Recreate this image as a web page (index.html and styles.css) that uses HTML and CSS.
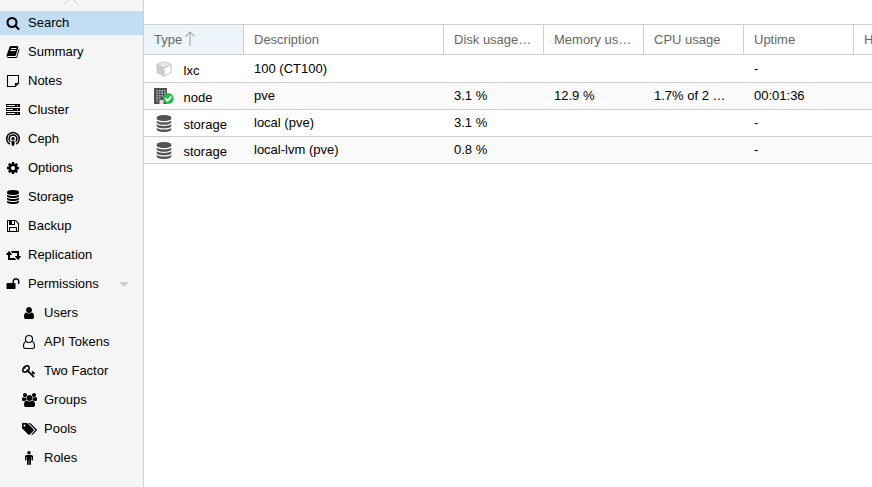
FILE: index.html
```
<!DOCTYPE html>
<html lang="en">
<head>
<meta charset="utf-8">
<title>Datacenter</title>
<link rel="stylesheet" href="styles.css">
</head>
<body>
<svg class="defs" aria-hidden="true">
<symbol id="database" viewBox="0 0 1792 1792"><path d="M896 768q237 0 443-43t325-127v170q0 69-103 128t-280 93.500-385 34.500-385-34.500-280-93.500-103-128v-170q119 84 325 127t443 43zm0 768q237 0 443-43t325-127v170q0 69-103 128t-280 93.500-385 34.500-385-34.500-280-93.500-103-128v-170q119 84 325 127t443 43zm0-384q237 0 443-43t325-127v170q0 69-103 128t-280 93.500-385 34.500-385-34.500-280-93.500-103-128v-170q119 84 325 127t443 43zm0-1152q208 0 385 34.500t280 93.500 103 128v128q0 69-103 128t-280 93.500-385 34.500-385-34.500-280-93.500-103-128v-128q0-69 103-128t280-93.500 385-34.500z"/></symbol>
</svg>
<div class="app">
<nav class="sidebar">
  <svg class="scroll-up" viewBox="0 0 16 6"><path d="M1 4.500L8-2.500l7 7"/></svg>
  <a class="item active"><svg class="icon" viewBox="0 0 1792 1792"><path d="M1216 832q0-185-131.500-316.500t-316.500-131.500-316.500 131.500-131.500 316.500 131.500 316.500 316.500 131.500 316.500-131.500 131.500-316.500zm512 832q0 52-38 90t-90 38q-54 0-90-38l-343-342q-179 124-399 124-143 0-273.500-55.500t-225-150-150-225-55.500-273.500 55.500-273.500 150-225 225-150 273.500-55.500 273.500 55.500 225 150 150 225 55.500 273.500q0 220-124 399l343 343q37 37 37 90z"/></svg>Search</a>
  <a class="item"><svg class="icon" viewBox="0 0 1792 1792"><path d="M1703 478q40 57 18 129l-275 906q-19 64-76.500 107.500t-122.500 43.500h-923q-77 0-148.500-53.500t-99.500-131.500q-24-67-2-127 0-4 3-27t4-37q1-8-3-21.500t-3-19.500q2-11 8-21t16.500-23.500 16.500-23.500q23-38 45-91.500t30-91.500q3-10 .5-30t-.5-28q3-11 17-28t17-23q21-36 42-92t25-90q1-9-2.500-32t.5-28q4-13 22-30.500t22-22.500q19-26 42.500-84.500t27.500-96.500q1-8-3-25.500t-2-26.500q2-8 9-18t18-23 17-21q8-12 16.500-30.500t15-35 16-36 19.500-32 26.500-23.500 36-11.500 47.500 5.500l-1 3q38-9 51-9h761q74 0 114 56t18 130l-274 906q-36 119-71.500 153.500t-128.500 34.500h-869q-27 0-38 15-11 16-1 43 24 70 144 70h923q29 0 56-15.500t35-41.500l300-987q7-22 5-57 38 15 59 43zm-1064 2q-4 13 2 22.500t20 9.500h608q13 0 25.500-9.500t16.500-22.500l21-64q4-13-2-22.500t-20-9.500h-608q-13 0-25.500 9.500t-16.500 22.500zm-83 256q-4 13 2 22.500t20 9.500h608q13 0 25.500-9.500t16.500-22.500l21-64q4-13-2-22.500t-20-9.500h-608q-13 0-25.500 9.500t-16.500 22.500z"/></svg>Summary</a>
  <a class="item"><svg class="icon line" viewBox="0 0 14 14"><path d="M1.500 1.500h11v7.700l-3.300 3.300H1.500zM12.500 9.500h-3v3"/></svg>Notes</a>
  <a class="item"><svg class="icon" viewBox="0 0 14 14"><path fill-rule="evenodd" d="M0 1h14v3H0zM1 2v1h8V2zM11 2v1h1V2zM0 5h14v3H0zM1 6v1h6V6zM11 6v1h1V6zM0 9h14v3H0zM1 10v1h8v-1zM11 10v1h1v-1z"/></svg>Cluster</a>
  <a class="item"><svg class="icon podcast" viewBox="0 0 14 14"><path d="M3.900 12.200A6.300 6.300 0 1 1 10.100 12.200M4.300 9.600A3.900 3.900 0 1 1 9.700 9.600"/><circle cx="7" cy="6.800" r="1.700"/><path class="solid" d="M5.200 9.500q1.800-1 3.600 0l-.6 3.600q-.2.900-1.200.9t-1.200-.9z"/></svg>Ceph</a>
  <a class="item"><svg class="icon" viewBox="0 0 1792 1792"><path d="M1152 896q0-106-75-181t-181-75-181 75-75 181 75 181 181 75 181-75 75-181zm512-109v222q0 12-8 23t-20 13l-185 28q-19 54-39 91 35 50 107 138 10 12 10 25t-9 23q-27 37-99 108t-94 71q-12 0-26-9l-138-108q-44 23-91 38-16 136-29 186-7 28-36 28h-222q-14 0-24.500-8.500t-11.500-21.500l-28-184q-49-16-90-37l-141 107q-10 9-25 9-14 0-25-11-126-114-165-168-7-10-7-23 0-12 8-23 15-21 51-66.500t54-70.500q-27-50-41-99l-183-27q-13-2-21-12.500t-8-23.500v-222q0-12 8-23t19-13l186-28q14-46 39-92-40-57-107-138-10-12-10-24 0-10 9-23 26-36 98.500-107.500t94.500-71.500q13 0 26 10l138 107q44-23 91-38 16-136 29-186 7-28 36-28h222q14 0 24.500 8.500t11.500 21.500l28 184q49 16 90 37l142-107q9-9 24-9 13 0 25 10 129 119 165 170 7 8 7 22 0 12-8 23-15 21-51 66.500t-54 70.500q26 50 41 98l183 28q13 2 21 12.500t8 23.500z"/></svg>Options</a>
  <a class="item"><svg class="icon"><use href="#database"/></svg>Storage</a>
  <a class="item"><svg class="icon" viewBox="0 0 1792 1792"><path d="M512 1536h768v-384h-768v384zm896 0h128v-896q0-14-10-38.500t-20-34.500l-281-281q-10-10-34-20t-39-10v416q0 40-28 68t-68 28h-576q-40 0-68-28t-28-68v-416h-128v1280h128v-416q0-40 28-68t68-28h832q40 0 68 28t28 68v416zm-384-928v-320q0-13-9.500-22.500t-22.500-9.500h-192q-13 0-22.500 9.500t-9.500 22.500v320q0 13 9.500 22.500t22.500 9.500h192q13 0 22.500-9.500t9.500-22.500zm640 32v928q0 40-28 68t-68 28h-1344q-40 0-68-28t-28-68v-1344q0-40 28-68t68-28h928q40 0 88 20t76 48l280 280q28 28 48 76t20 88z"/></svg>Backup</a>
  <a class="item"><svg class="icon wide" viewBox="0 0 1920 1792"><path d="M1280 1504q0 13-9.500 22.500t-22.500 9.500h-960q-8 0-13.500-2t-9-7-5.500-8-3-11.500-1-11.500v-600h-192q-26 0-45-19t-19-45q0-24 15-41l320-384q19-22 49-22t49 22l320 384q15 17 15 41 0 26-19 45t-45 19h-192v384h576q16 0 25 11l160 192q7 10 7 21zm640-416q0 24-15 41l-320 384q-20 23-49 23t-49-23l-320-384q-15-17-15-41 0-26 19-45t45-19h192v-384h-576q-16 0-25-12l-160-192q-7-9-7-20 0-13 9.500-22.500t22.500-9.500h960q8 0 13.500 2t9 7 5.500 8 3 11.500 1 11.500v600h192q26 0 45 19t19 45z"/></svg>Replication</a>
  <a class="item"><svg class="icon" viewBox="0 0 1792 1792"><path d="M1728 576v256q0 26-19 45t-45 19h-64q-26 0-45-19t-19-45v-256q0-106-75-181t-181-75-181 75-75 181v192h96q40 0 68 28t28 68v576q0 40-28 68t-68 28h-960q-40 0-68-28t-28-68v-576q0-40 28-68t68-28h672v-192q0-185 131.500-316.500t316.500-131.500 316.500 131.500 131.500 316.500z"/></svg>Permissions<i class="caret"></i></a>
  <a class="item sub"><svg class="icon" viewBox="0 0 1792 1792"><path d="M1536 1399q0 109-62.500 187t-150.500 78h-854q-88 0-150.500-78t-62.500-187q0-85 8.500-160.500t31.500-152 58.500-131 94-89 134.500-34.500q131 128 313 128t313-128q76 0 134.500 34.500t94 89 58.500 131 31.500 152 8.500 160.500zm-256-887q0 159-112.500 271.500t-271.500 112.500-271.500-112.500-112.500-271.500 112.500-271.500 271.500-112.500 271.500 112.500 112.500 271.500z"/></svg>Users</a>
  <a class="item sub"><svg class="icon line" viewBox="0 0 14 14"><circle cx="7" cy="4" r="3.500"/><path d="M4.300 6.500C2.400 6.700 1.500 9 1.500 11.300c0 1.300.8 2.200 1.900 2.200h7.200c1.100 0 1.900-.9 1.900-2.200 0-2.300-.9-4.600-2.800-4.800"/></svg>API Tokens</a>
  <a class="item sub"><svg class="icon" viewBox="0 0 1792 1792"><path d="M832 512q0-80-56-136t-136-56-136 56-56 136q0 42 19 83-41-19-83-19-80 0-136 56t-56 136 56 136 136 56 136-56 56-136q0-42-19-83 41 19 83 19 80 0 136-56t56-136zm851 704q0 17-49 66t-66 49q-9 0-28.500-16t-36.500-33-38.500-40-24.500-26l-96 96 220 220q28 28 28 68 0 42-39 81t-81 39q-40 0-68-28l-671-671q-176 131-365 131-163 0-265.500-102.500t-102.500-265.500q0-160 95-313t248-248 313-95q163 0 265.500 102.500t102.500 265.500q0 189-131 365l355 355 96-96q-3-3-26-24.500t-40-38.500-33-36.500-16-28.500q0-17 49-66t66-49q13 0 23 10 6 6 46 44.500t82 79.500 86.500 86 73 78 28.500 41z"/></svg>Two Factor</a>
  <a class="item sub"><svg class="icon wide" viewBox="0 0 1920 1792"><path d="M593 896q-162 5-265 128h-134q-82 0-138-40.500t-56-118.500q0-353 124-353 6 0 43.500 21t97.500 42.500 119 21.500q67 0 133-23-5 37-5 66 0 159 81 256zm1071 637q0 120-73 189.500t-194 69.500h-874q-121 0-194-69.500t-73-189.500q0-53 3.500-103.500t14-109 26.500-108.500 43-97.500 62-81 85.500-53.500 111.500-20q10 0 43 21.500t73 48 107 48 135 21.500 135-21.500 107-48 73-48 43-21.500q61 0 111.500 20t85.500 53.500 62 81 43 97.500 26.500 108.500 14 109 3.500 103.500zm-1024-1277q0 106-75 181t-181 75-181-75-75-181 75-181 181-75 181 75 75 181zm704 384q0 159-112.500 271.500t-271.500 112.500-271.500-112.500-112.500-271.500 112.500-271.500 271.500-112.500 271.500 112.500 112.500 271.500zm576 225q0 78-56 118.500t-138 40.500h-134q-103-123-265-128 93-134 93-293 0-29-5-66 66 23 133 23 59 0 119-21.500t97.500-42.500 43.500-21q124 0 124 353zm-128-609q0 106-75 181t-181 75-181-75-75-181 75-181 181-75 181 75 75 181z"/></svg>Groups</a>
  <a class="item sub"><svg class="icon wide" viewBox="0 0 1920 1792"><path d="M448 448q0-53-37.500-90.500t-90.500-37.500-90.500 37.500-37.500 90.500 37.500 90.500 90.500 37.500 90.500-37.500 37.500-90.500zm1067 576q0 53-37 90l-491 492q-39 37-91 37-53 0-90-37l-715-716q-38-37-64.500-101t-26.500-117v-416q0-52 38-90t90-38h416q53 0 117 26.500t102 64.500l715 714q37 39 37 91zm384 0q0 53-37 90l-491 492q-39 37-91 37-36 0-59-14t-53-45l470-470q37-37 37-90 0-52-37-91l-715-714q-38-38-102-64.500t-117-26.500h224q53 0 117 26.500t102 64.500l715 714q37 39 37 91z"/></svg>Pools</a>
  <a class="item sub"><svg class="icon" viewBox="0 0 1792 1792"><circle cx="896" cy="224" r="224"/><path d="M1408 704v416q0 40-28 68t-68 28-68-28-28-68v-352h-64v912q0 46-33 79t-79 33-79-33-33-79v-464h-64v464q0 46-33 79t-79 33-79-33-33-79v-912h-64v352q0 40-28 68t-68 28-68-28-28-68v-416q0-80 56-136t136-56h640q80 0 136 56t56 136z"/></svg>Roles</a>
</nav>
<main class="panel">
  <div class="toolbar"></div>
  <div class="grid head">
    <div class="cell sorted">Type<svg class="arrow" viewBox="0 0 12 15"><path d="M6 15V1M1.500 5.500L6 1l4.500 4.500"/></svg></div>
    <div class="cell">Description</div><div class="cell">Disk usage %</div><div class="cell">Memory usage %</div><div class="cell">CPU usage</div><div class="cell">Uptime</div><div class="cell last">H</div>
  </div>
  <div class="grid row first">
    <div class="cell type"><svg class="type-icon" viewBox="0 0 20 18"><path fill="#ccc" stroke="#ccc" stroke-width="1.200" stroke-linejoin="round" d="M10 1.800l7 2.400v8.500l-7 3.600-7-3.600V4.200z"/><path fill="#e9e9e9" d="M10 2.200l6 2.200-6 2.400-6-2.400z"/><path fill="#fff" d="M10.700 8.200L16.400 5.800v6.400l-5.700 3z"/></svg><span>lxc</span></div>
    <div class="cell">100 (CT100)</div><div class="cell"></div><div class="cell"></div><div class="cell"></div><div class="cell">-</div><div class="cell last"></div>
  </div>
  <div class="grid row alt">
    <div class="cell type"><svg class="type-icon" viewBox="0 0 20 18"><path fill="#505050" d="M0 1h13v16H0z"/><path fill="#a9bbd0" d="M2.500 3H4v1.500H2.500zM5 3h1.500v1.500H5zM7.500 3H9v1.500H7.500zM10 3h1.500v1.500H10zM2.500 5.500H4V7H2.500zM5 5.500h1.500V7H5zM7.500 5.500H9V7H7.500zM10 5.500h1.500V7H10zM2.500 8H4v1.500H2.500zM5 8h1.500v1.500H5zM7.500 8H9v1.500H7.500zM2.500 10.500H4V12H2.500zM5 10.500h1.500V12H5zM2.500 13H4v1.500H2.500z"/><path fill="#e5ddd5" d="M5.500 13h4v4h-4z"/><circle cx="14.300" cy="11.500" r="5.400" fill="#21bf4b"/><path fill="none" stroke="#fff" stroke-width="1.900" d="M11.300 11.500l2.200 2.200 3.900-4.100"/></svg><span>node</span></div>
    <div class="cell">pve</div><div class="cell">3.1 %</div><div class="cell">12.9 %</div><div class="cell">1.7% of 2 CPUs</div><div class="cell">00:01:36</div><div class="cell last"></div>
  </div>
  <div class="grid row">
    <div class="cell type"><svg class="type-icon db"><use href="#database"/></svg><span>storage</span></div>
    <div class="cell">local (pve)</div><div class="cell">3.1 %</div><div class="cell"></div><div class="cell"></div><div class="cell">-</div><div class="cell last"></div>
  </div>
  <div class="grid row alt">
    <div class="cell type"><svg class="type-icon db"><use href="#database"/></svg><span>storage</span></div>
    <div class="cell">local-lvm (pve)</div><div class="cell">0.8 %</div><div class="cell"></div><div class="cell"></div><div class="cell">-</div><div class="cell last"></div>
  </div>
</main>
</div>
</body>
</html>
```
FILE: styles.css
```
* { box-sizing: border-box; }
body { margin: 0; font: 13px/17px "Liberation Sans", Arial, sans-serif; color: #000; background: #fff; overflow: hidden; }
.defs { display: none; }
.app { display: flex; height: 487px; }
.sidebar { display: flex; flex-direction: column; gap: 5px; width: 144px; flex: none; background: #f5f5f5; border-right: 1px solid #cfcfcf; }
.scroll-up { width: 16px; height: 6px; margin-left: 63px; flex: none; fill: none; stroke: #cfcfcf; }
.item { display: flex; align-items: center; height: 24px; flex: none; padding: 0 0 2px 6px; }
.item.sub { padding-left: 22px; }
.item.active { background: #c2ddf2; }
.icon { width: 14px; height: 14px; margin: 2px 8px 0 0; flex: none; overflow: visible; }
.icon.wide { width: 15px; margin-left: -.5px; margin-right: 7.5px; }
.icon.line { fill: none; stroke: #000; stroke-width: 1.1; }
.podcast { fill: none; stroke: #000; stroke-width: 1.5; }
.podcast circle, .podcast .solid { fill: #000; stroke: none; }
.caret { margin: 2px 0 0 20px; border: 5px solid transparent; border-top-color: #cfcfcf; border-bottom: 0; }
.panel { flex: 1; min-width: 0; }
.toolbar { height: 24px; }
.grid { display: grid; grid-template-columns: 100px 200px 100px 100px 100px 110px 1fr; }
.head { height: 31px; border: solid #cfcfcf; border-width: 1px 0; color: #666; }
.cell { padding: 0 10px; overflow: hidden; white-space: nowrap; text-overflow: ellipsis; }
.cell.last { padding-right: 0; text-overflow: clip; }
.head .cell { padding-top: 6px; border-right: 1px solid #cfcfcf; }
.head .cell.last { border-right: 0; }
.head .sorted { background: #edf5fb; }
.arrow { width: 12px; height: 15px; margin-left: 2px; vertical-align: -2px; fill: none; stroke: #aaa; stroke-width: 1.2; }
.row { height: 27px; border-bottom: 1px solid #cfcfcf; }
.row .cell { padding-top: 4px; }
.row.first { height: 28px; padding-top: 1px; }
.row.alt { background: #fafafa; }
.row .cell.type { display: flex; padding-right: 0; }
.type-icon { width: 20px; height: 18px; flex: none; }
.type-icon.db { height: 17px; margin-top: 1px; fill: #555; }
.type span { margin: 2px 0 0 9.500px; }
```
